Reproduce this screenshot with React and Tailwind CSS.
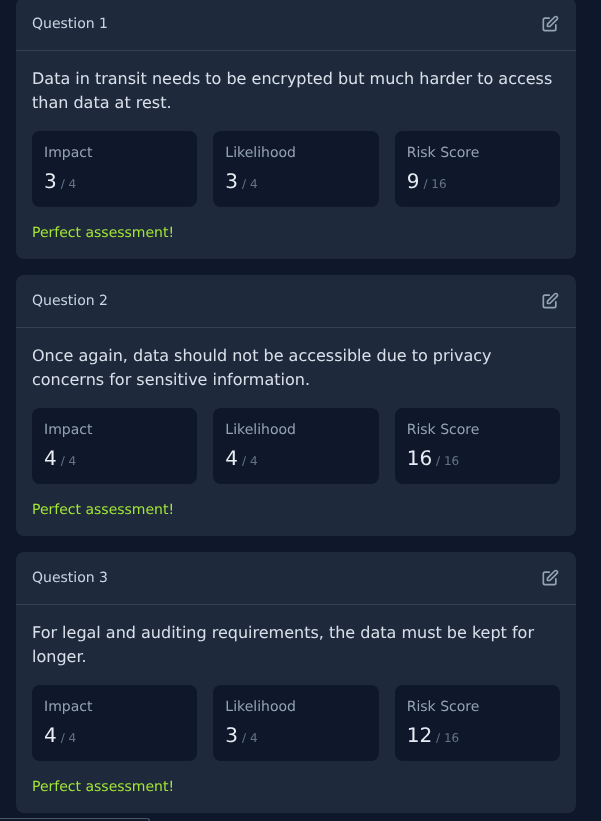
import React from 'react';

const questions = [
  {
    id: 1,
    text: 'Data in transit needs to be encrypted but much harder to access than data at rest.',
    impact: 3,
    likelihood: 3,
  },
  {
    id: 2,
    text: 'Once again, data should not be accessible due to privacy concerns for sensitive information.',
    impact: 4,
    likelihood: 4,
  },
  {
    id: 3,
    text: 'For legal and auditing requirements, the data must be kept for longer.',
    impact: 4,
    likelihood: 3,
  },
];

const EditIcon = () => (
  <svg className="w-5 h-5 text-[#94a3b8]" viewBox="0 0 24 24" fill="none" stroke="currentColor" strokeWidth="2" strokeLinecap="round" strokeLinejoin="round">
    <path d="M11 5H6a2 2 0 00-2 2v11a2 2 0 002 2h11a2 2 0 002-2v-5m-1.414-9.414a2 2 0 112.828 2.828L11.828 15H9v-2.828l8.586-8.586z" />
  </svg>
);

const Stat = ({ label, value, max }) => (
  <div className="bg-[#0f172a] rounded-lg p-3 h-[76px]">
    <div className="text-sm leading-5 text-[#94a3b8]">{label}</div>
    <div className="mt-1 flex items-baseline leading-7">
      <span className="text-xl text-[#e8edf4]">{value}</span>
      <span className="ml-1 text-xs text-[#64748b]">/ {max}</span>
    </div>
  </div>
);

const QuestionCard = ({ question }) => (
  <div className="bg-[#1e293b] rounded-lg">
    <div className="flex items-center justify-between h-[53px] px-4 border-b border-[#334155]">
      <span className="text-sm leading-5 text-[#cbd5e1]">Question {question.id}</span>
      <EditIcon />
    </div>
    <div className="p-4">
      <p className="text-[#d9e0ea] leading-6">{question.text}</p>
      <div className="grid grid-cols-3 gap-4 mt-4">
        <Stat label="Impact" value={question.impact} max={4} />
        <Stat label="Likelihood" value={question.likelihood} max={4} />
        <Stat label="Risk Score" value={question.impact * question.likelihood} max={16} />
      </div>
      <p className="mt-4 text-sm leading-5 text-[#a3e635]">Perfect assessment!</p>
    </div>
  </div>
);

export default function App() {
  return (
    <div className="relative h-[821px] overflow-hidden bg-[#0f172a] [text-rendering:geometricPrecision] font-['DejaVu_Sans',sans-serif]">
      <div className="flex flex-col gap-4 pl-4 pr-[25px] -mt-[2px] will-change-transform">
        {questions.map((question) => (
          <QuestionCard key={question.id} question={question} />
        ))}
      </div>
      <div className="absolute left-0 bottom-0 w-[150px] h-[3px] bg-[#111827] border-t border-r border-[#475569] rounded-tr-lg" />
    </div>
  );
}
